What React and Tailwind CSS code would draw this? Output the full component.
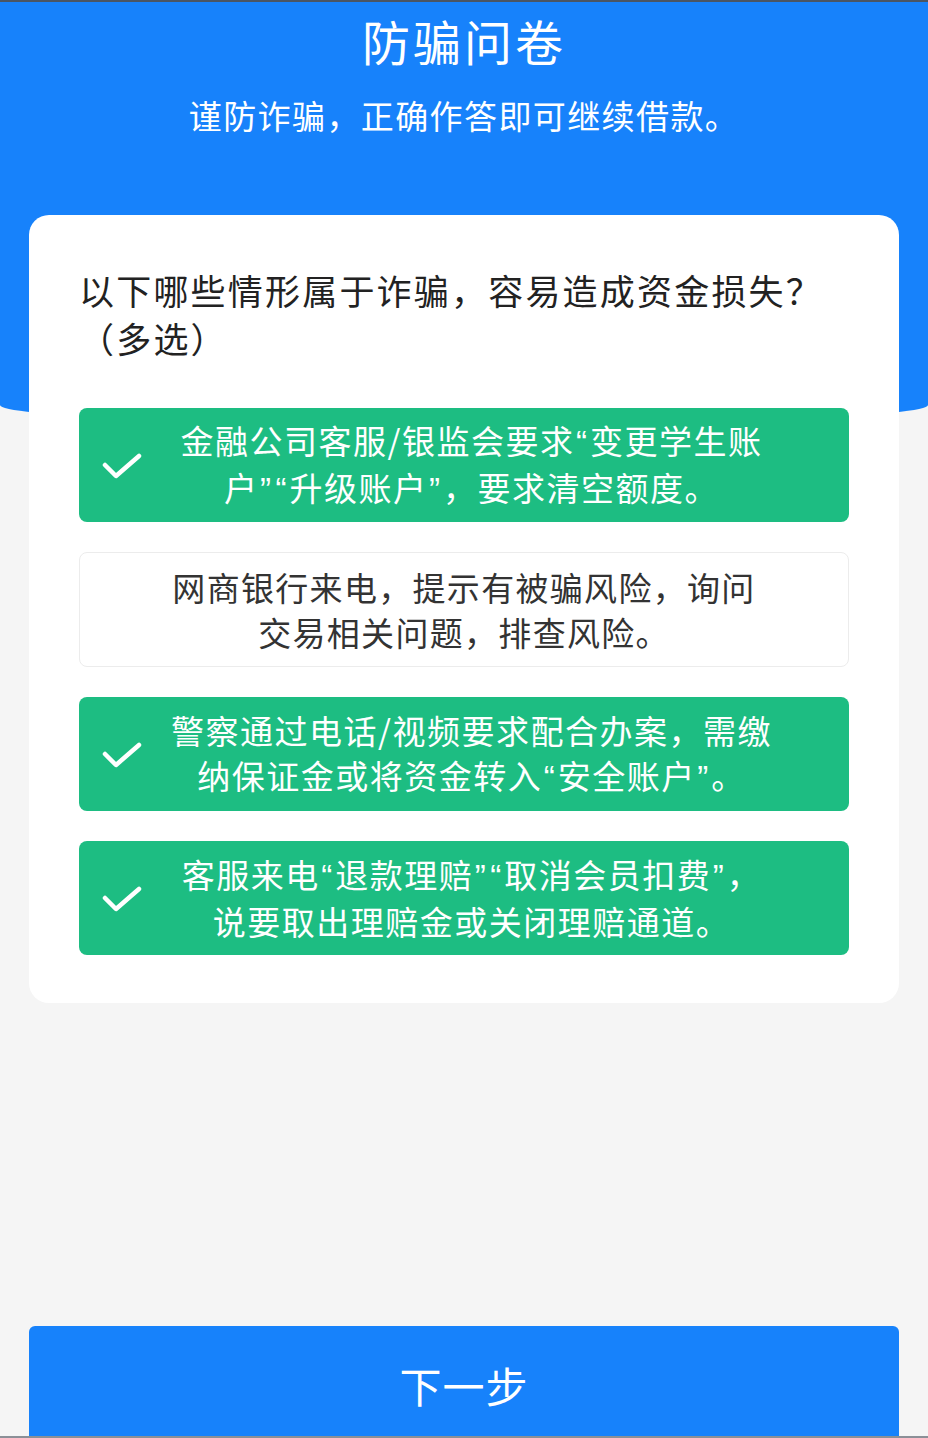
import React from 'react';

// Anti-fraud questionnaire page (multi-select question)
const options = [
  { id: 1, lines: ['金融公司客服/银监会要求“变更学生账', '户”“升级账户”，要求清空额度。'], checked: true },
  { id: 2, lines: ['网商银行来电，提示有被骗风险，询问', '交易相关问题，排查风险。'], checked: false },
  { id: 3, lines: ['警察通过电话/视频要求配合办案，需缴', '纳保证金或将资金转入“安全账户”。'], checked: true },
  { id: 4, lines: ['客服来电“退款理赔”“取消会员扣费”，', '说要取出理赔金或关闭理赔通道。'], checked: true },
];

// the screenshot draws the curly quotes narrow (Western width), not CJK width
const renderLine = (text) =>
  text.split('').map((ch, i) =>
    ch === '“' || ch === '”' ? (
      <span key={i} className="px-[1.5px] font-['Liberation_Sans']">
        {ch}
      </span>
    ) : (
      ch
    )
  );

const CheckMark = () => (
  <svg width="40" height="30" viewBox="0 0 40 30" fill="none">
    <polyline points="3,15 14,26 37,6" stroke="white" strokeWidth="4.5" strokeLinecap="round" strokeLinejoin="round" />
  </svg>
);

const Option = ({ option }) => {
  if (option.checked) {
    return (
      <div className="flex h-[114px] items-center rounded-lg bg-[#1dbd82] text-white">
        <div className="flex w-[71px] justify-end pr-[8px]">
          <CheckMark />
        </div>
        <div className="flex-1 pr-[56px] text-center text-[33px] leading-[45px] tracking-[1.5px]">
          {option.lines.map((l, i) => (
            <div key={i} className="whitespace-nowrap">{renderLine(l)}</div>
          ))}
        </div>
      </div>
    );
  }
  return (
    <div className="flex h-[115px] flex-col items-center justify-center rounded-lg border border-[#ececec] bg-white text-[33px] leading-[45px] tracking-[1.3px] text-[#333]">
      {option.lines.map((l, i) => (
        <div key={i} className="whitespace-nowrap">{renderLine(l)}</div>
      ))}
    </div>
  );
};

export default function App() {
  return (
    <div
      className="flex h-[1438px] flex-col overflow-hidden bg-[#f5f5f5]"
      style={{ fontFamily: '"Noto Sans CJK SC", "Noto Sans", sans-serif' }}
    >
      <header className="h-[425px] shrink-0 rounded-b-[50%_20px] border-t-2 border-[#4a5563] bg-[#1782fb] text-center text-white">
        <h1 className="mt-[8px] text-[48px] leading-[60px] tracking-[3px]">防骗问卷</h1>
        <p className="mt-[25px] text-[33px] leading-[40px] tracking-[1.4px]">谨防诈骗，正确作答即可继续借款。</p>
      </header>

      <main className="relative mx-[29px] -mt-[210px] rounded-[20px] bg-white px-[50px] pb-[48px] pt-[51px]">
        <h2 className="text-[35px] leading-[48px] tracking-[2.2px] text-[#222]">
          <span className="block whitespace-nowrap">以下哪些情形属于诈骗，容易造成资金损失？</span>
          <span className="block">（多选）</span>
        </h2>
        <div className="mt-[46px] flex flex-col gap-[30px]">
          {options.map((o) => (
            <Option key={o.id} option={o} />
          ))}
        </div>
      </main>

      <div className="mt-auto px-[29px]">
        <button className="flex h-[110px] w-full items-start justify-center rounded-t-md bg-[#1782fb] pt-[33px] text-[42px] leading-[52px] tracking-[1px] text-white">
          下一步
        </button>
      </div>
      <div className="h-[2px] shrink-0 bg-[#8b9097]" />
    </div>
  );
}
